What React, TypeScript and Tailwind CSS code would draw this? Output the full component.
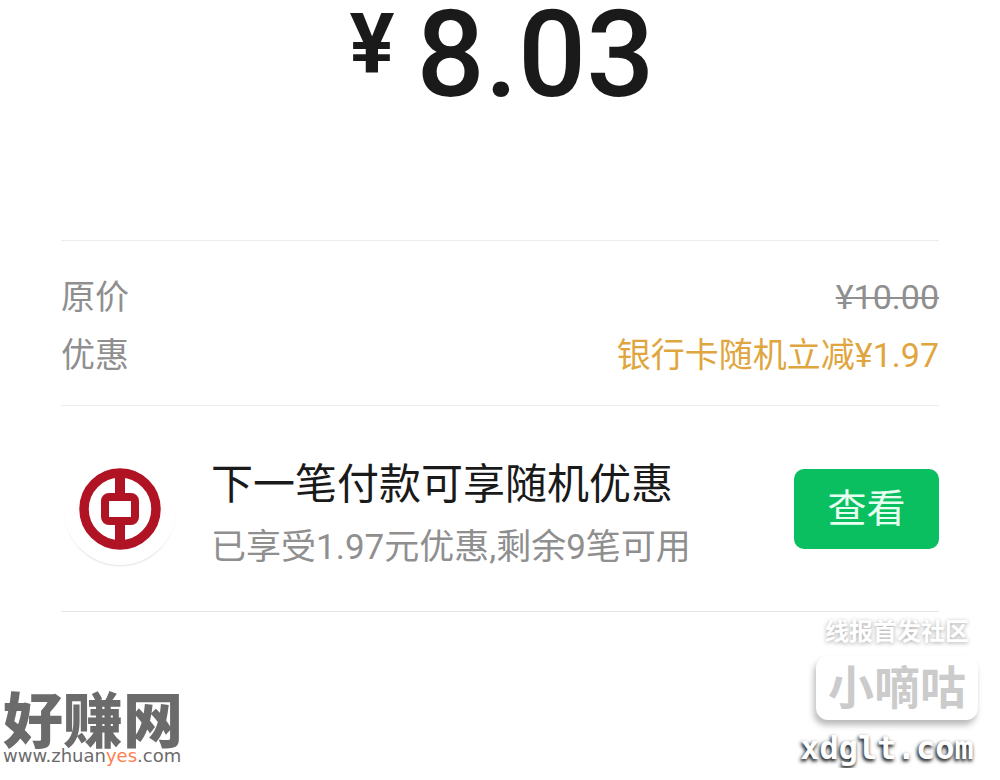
/**
 * Payment Result Page
 *
 * Paid amount, price breakdown and the next-payment offer
 */

interface PriceRowProps {
  label: string;
  children: React.ReactNode;
}

function PriceRow({ label, children }: PriceRowProps) {
  return (
    <div className="flex items-center justify-between text-[34px] leading-[58px]">
      <dt className="text-[#8f8f8f]">{label}</dt>
      <dd>{children}</dd>
    </div>
  );
}

function BankLogo() {
  return (
    <div className="ml-[3px] flex size-[112px] shrink-0 items-center justify-center rounded-full bg-white shadow-[0_2px_2px_-1px_rgba(0,0,0,0.12)]">
      <svg viewBox="0 0 82 82" className="size-[82px]" fill="none" stroke="#b01424" role="img" aria-label="中国银行">
        <circle cx="41" cy="41" r="36" strokeWidth="9.5" />
        <path d="M41 5v24M41 53v24" strokeWidth="10" />
        <rect x="26" y="29" width="30" height="24" rx="4" strokeWidth="8" />
      </svg>
    </div>
  );
}

function OfferCard() {
  return (
    <section className="flex items-center border-b border-[#e5e5e5] pt-[38px] pb-[37px]">
      <BankLogo />
      <div className="ml-[35px] flex-1 pt-[10px]">
        <h2 className="text-[42px] leading-[62px] text-[#1a1a1a]">下一笔付款可享随机优惠</h2>
        <p className="pt-[6px] text-[35px] leading-[52px] text-[#8f8f8f]">已享受1.97元优惠,剩余9笔可用</p>
      </div>
      <button
        type="button"
        className="h-[80px] w-[145px] shrink-0 rounded-[10px] bg-[#0abf5f] text-[39px] text-[#e6fff0]"
      >
        查看
      </button>
    </section>
  );
}

function SiteMark() {
  return (
    <div className="pb-[2px] text-[#6b6b6b]">
      <div className="text-[60px] leading-[46px] font-black">好赚网</div>
      <div className="font-['DejaVu_Sans',sans-serif] text-[18px] leading-[20px]">
        www.zhuan<span className="text-[#ff7f50]">yes</span>.com
      </div>
    </div>
  );
}

function CommunityMark() {
  return (
    <div className="flex flex-col items-center text-white">
      <div className="pl-[20px] text-[24px] leading-[32px] font-bold [text-shadow:0_1px_4px_rgba(0,0,0,0.35)]">
        线报首发社区
      </div>
      <div className="mt-[8px] ml-[20px] rounded-[12px] bg-white px-[12px] text-[46px] leading-[64px] font-bold text-[#cbcbcb] shadow-[-2px_5px_6px_rgba(0,0,0,0.28)]">
        小嘀咕
      </div>
      <div className="mt-[8px] font-['DejaVu_Sans_Mono',monospace] text-[32px] leading-[40px] font-bold [text-shadow:-1px_2px_4px_rgba(0,0,0,0.8),-1px_2px_3px_rgba(0,0,0,0.5)]">
        xdglt.com
      </div>
    </div>
  );
}

export default function App() {
  return (
    <div className="bg-white font-['Roboto','Noto_Sans_CJK_SC',sans-serif]">
      <main className="px-[61px]">
        <h1 className="flex items-start justify-center gap-[22px] pl-[4px] text-[#1a1a1a]">
          <span className="text-[84px] leading-[90px] font-bold">¥</span>
          <span className="text-[120px] leading-[110px] font-medium">8.03</span>
        </h1>

        <dl className="mt-[130px] border-y border-[#ececec] pt-[27px] pb-[21px]">
          <PriceRow label="原价">
            <s className="text-[#8f8f8f] decoration-2">¥10.00</s>
          </PriceRow>
          <PriceRow label="优惠">
            <span className="text-[#dfa640]">银行卡随机立减¥1.97</span>
          </PriceRow>
        </dl>

        <OfferCard />
      </main>

      <footer className="flex items-end justify-between pt-[4px] pr-[22px] pl-[3px]">
        <SiteMark />
        <CommunityMark />
      </footer>
    </div>
  );
}
